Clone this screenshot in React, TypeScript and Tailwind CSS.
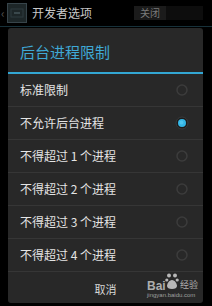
import React from "react";

const items = [
  { label: "标准限制", selected: false },
  { label: "不允许后台进程", selected: true },
  { label: "不得超过 1 个进程", selected: false },
  { label: "不得超过 2 个进程", selected: false },
  { label: "不得超过 3 个进程", selected: false },
  { label: "不得超过 4 个进程", selected: false },
];

function Radio({ selected }: { selected: boolean }) {
  if (selected) {
    return (
      <svg width="14" height="14" viewBox="0 0 14 14">
        <circle cx="7" cy="7" r="6" fill="#1c1c1c" stroke="#3a3a3a" strokeWidth="1" />
        <circle cx="7" cy="7" r="4" fill="#33b5e5" />
        <circle cx="6.5" cy="6.5" r="2" fill="#5fd0f5" opacity="0.6" />
      </svg>
    );
  }
  return (
    <svg width="14" height="14" viewBox="0 0 14 14">
      <circle cx="7" cy="7" r="5" fill="none" stroke="#3c3c3c" strokeWidth="1.5" />
    </svg>
  );
}

export default function App() {
  return (
    <div
      className="relative w-[212px] h-[306px] bg-black overflow-hidden flex flex-col"
      style={{ fontFamily: '"Noto Sans CJK SC", "Noto Sans", sans-serif' }}
    >
      {/* top action bar */}
      <div className="h-[26px] flex items-center bg-black">
        <span className="w-[6px] text-[12px] leading-none text-[#555] pl-[1px]">‹</span>
        <div className="w-[20px] h-[20px] ml-[1px] bg-[#1d2628] border border-[#37444a] flex items-center justify-center">
          <svg width="14" height="12" viewBox="0 0 14 12">
            <rect x="1" y="2" width="12" height="8" fill="none" stroke="#2e3a3e" strokeWidth="1" />
            <rect x="4" y="5" width="6" height="2" fill="#3a484c" />
          </svg>
        </div>
        <span className="ml-[5px] text-[12px] leading-none text-[#c8c8c8]">开发者选项</span>
        <div className="ml-auto mr-[9px] flex h-[14px]">
          <div className="w-[32px] bg-[#1b1b1b] flex items-center justify-center text-[10px] leading-none text-[#7a7a7a]">
            关闭
          </div>
          <div className="w-[37px] bg-[#0d0d0d]" />
        </div>
      </div>
      <div className="h-[1px] bg-[#17313a]" />
      <div className="h-[1px]" />

      {/* dialog */}
      <div className="ml-[8px] w-[195px] h-[275px] bg-[#282828] rounded-[3px] flex flex-col">
        <div className="h-[44px] flex items-center px-[12px] pt-[3px]">
          <span className="text-[15px] leading-none text-[#3fa9d6]">后台进程限制</span>
        </div>
        <div className="h-[2px] bg-[#33a7d4]" />
        {items.map((it) => (
          <div
            key={it.label}
            className="h-[33px] flex items-center justify-between pl-[12px] pr-[14px] border-b border-[#363636]"
          >
            <span className="text-[12px] leading-none text-[#e4e4e4]">{it.label}</span>
            <Radio selected={it.selected} />
          </div>
        ))}
        <div className="flex-1 flex items-center justify-center pt-[4px]">
          <span className="text-[11px] leading-none text-[#d8d8d8]">取消</span>
        </div>
      </div>

      {/* watermark */}
      <div className="absolute left-[147px] top-[271px] w-[60px] h-[28px] pointer-events-none">
        <div
          className="absolute left-0 top-[9px] text-[12px] font-bold leading-none text-[#d0d0d0] opacity-80 whitespace-nowrap"
          style={{ fontFamily: '"Liberation Sans", sans-serif' }}
        >
          Bai
        </div>
        <svg className="absolute left-[18px] top-[2px]" width="14" height="17" viewBox="0 0 14 17">
          <circle cx="4" cy="2.5" r="2" fill="#d0d0d0" opacity="0.85" />
          <circle cx="10" cy="2.5" r="2" fill="#d0d0d0" opacity="0.85" />
          <circle cx="1.8" cy="7" r="1.6" fill="#d0d0d0" opacity="0.85" />
          <circle cx="12.2" cy="7" r="1.6" fill="#d0d0d0" opacity="0.85" />
          <path d="M7 7 C4 7 2 11 2 13 C2 15 4 16 7 16 C10 16 12 15 12 13 C12 11 10 7 7 7 Z" fill="#d0d0d0" opacity="0.85" />
        </svg>
        <div className="absolute left-[33px] top-[9px] text-[9px] leading-none text-[#cfcfcf] opacity-80 whitespace-nowrap">
          经验
        </div>
        <div
          className="absolute left-0 top-[21px] text-[6px] leading-none text-[#bdbdbd] opacity-80 whitespace-nowrap"
          style={{ fontFamily: '"Liberation Sans", sans-serif' }}
        >
          jingyan.baidu.com
        </div>
      </div>
    </div>
  );
}
